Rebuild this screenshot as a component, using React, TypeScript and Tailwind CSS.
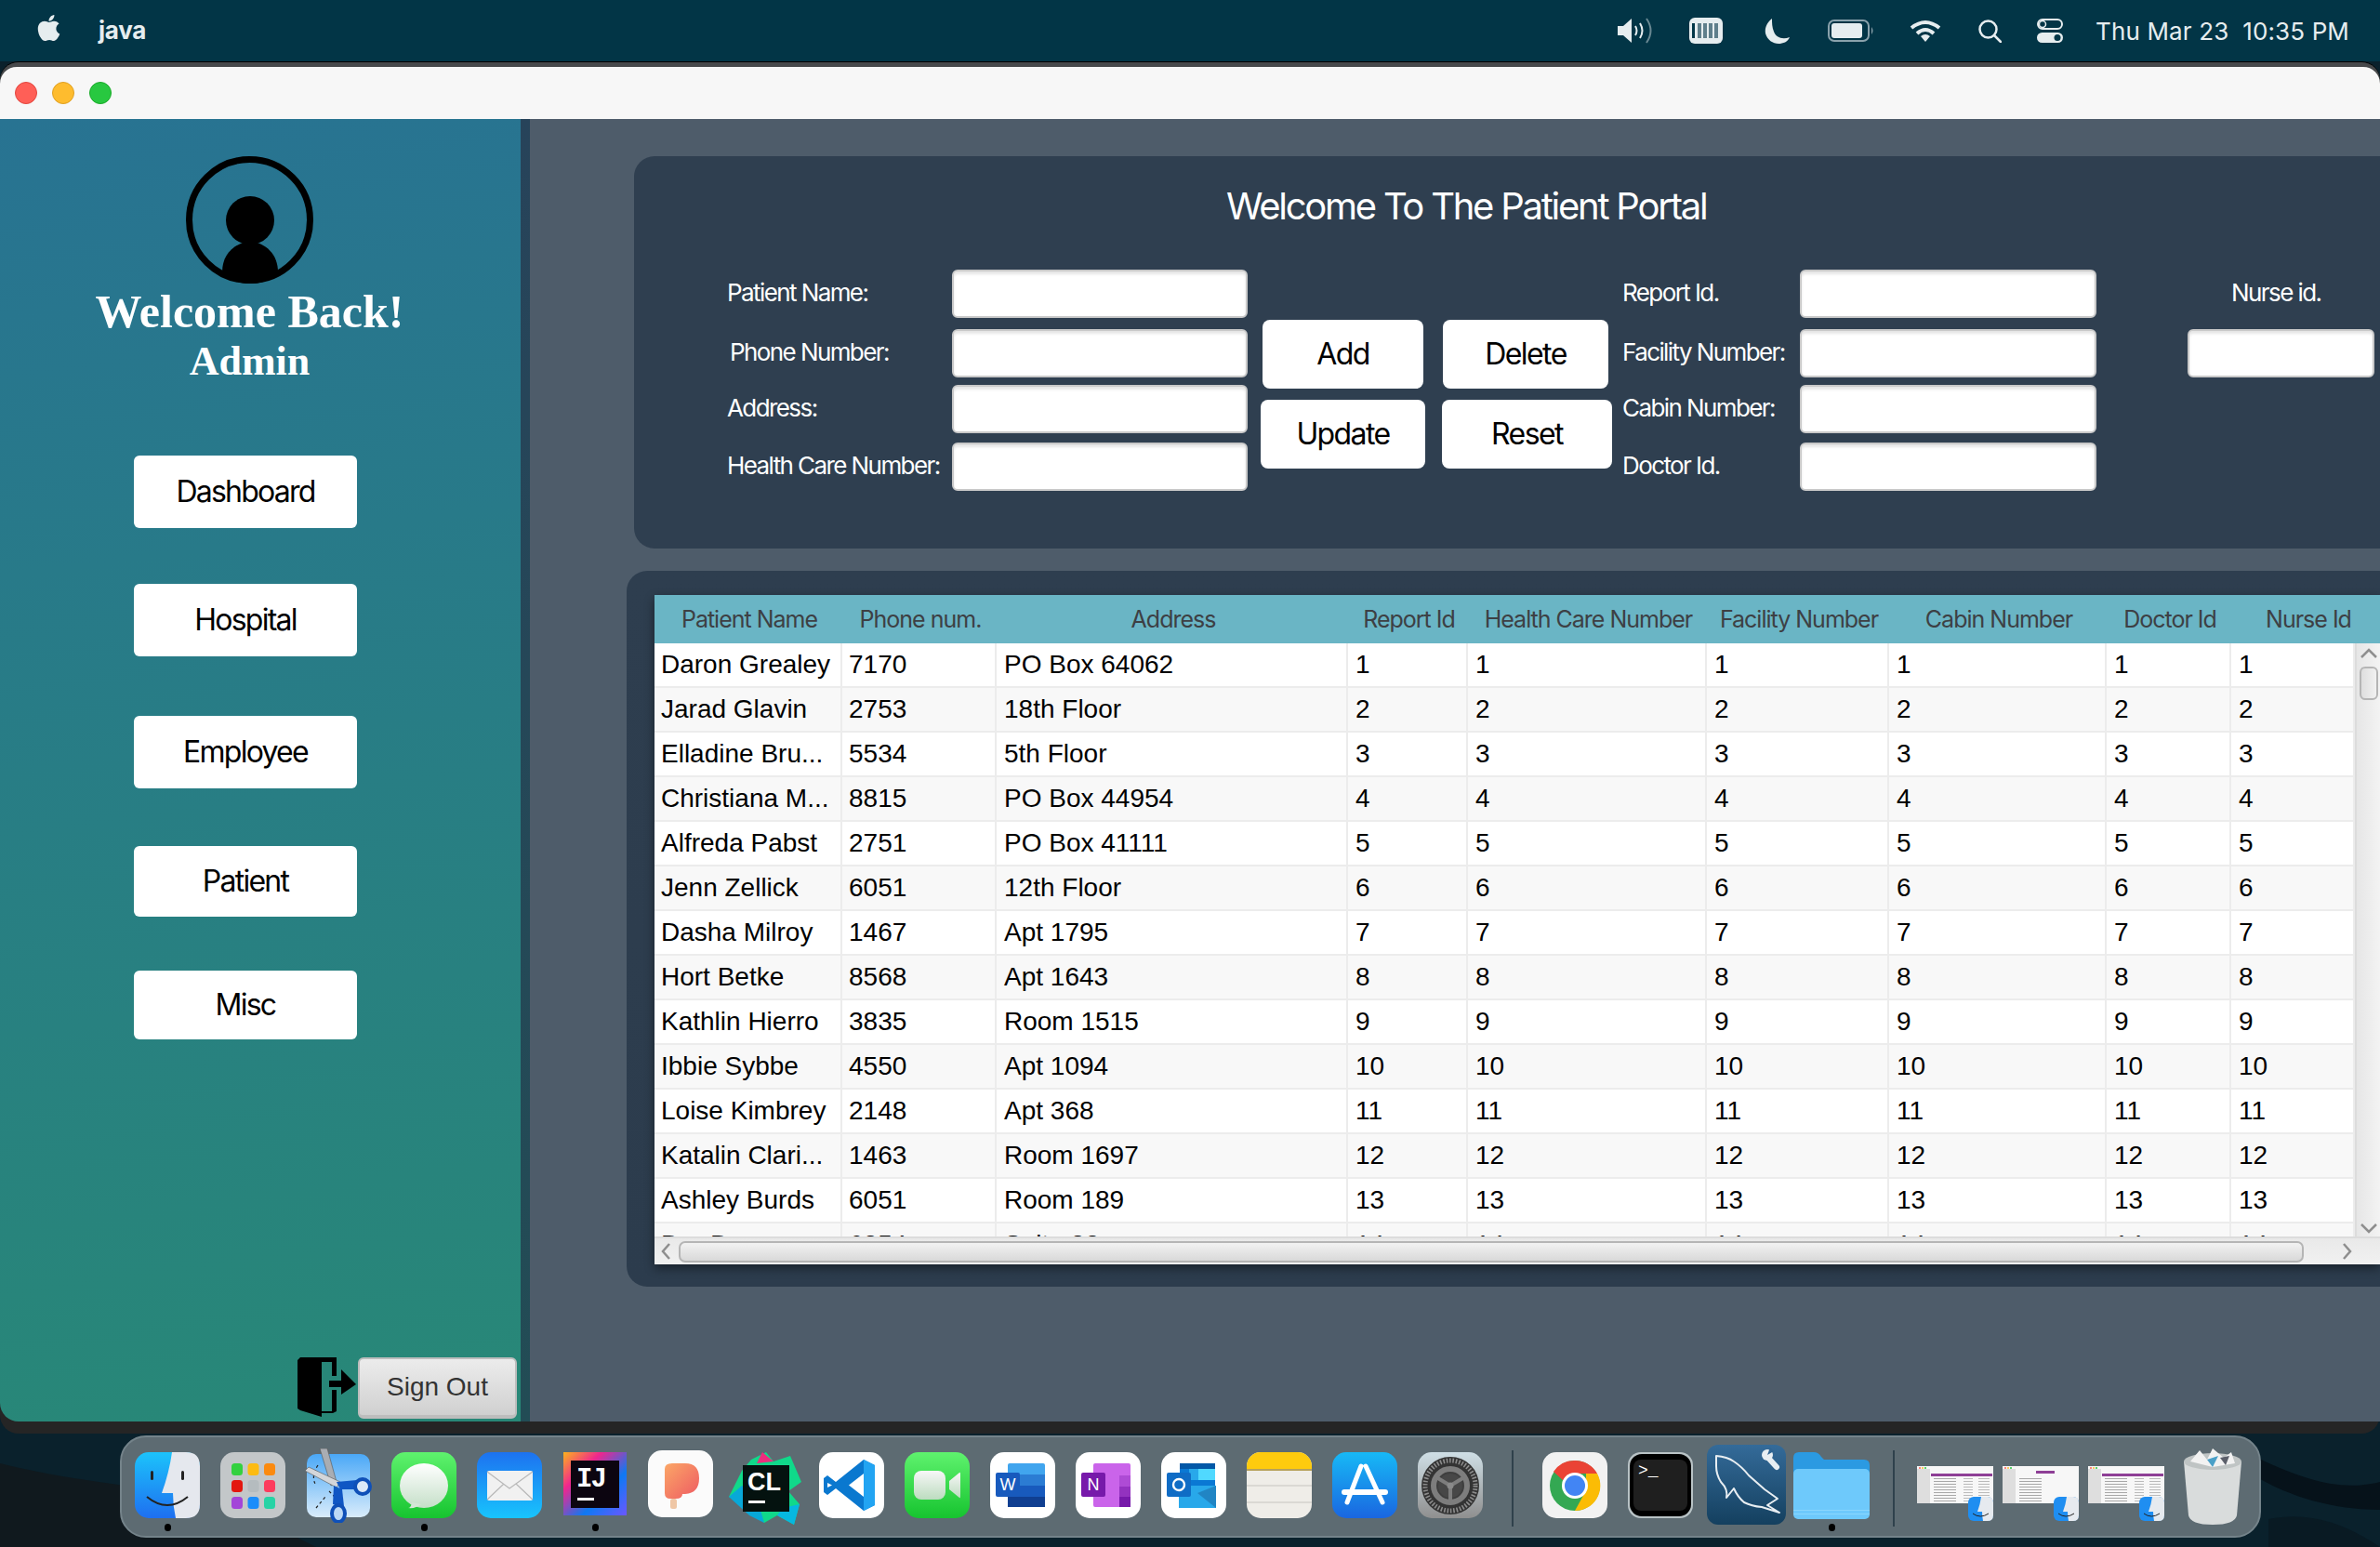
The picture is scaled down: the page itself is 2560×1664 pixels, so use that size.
import React from 'react'
import { FaApple } from 'react-icons/fa'

const patients = [
  ['Daron Grealey', '7170', 'PO Box 64062'],
  ['Jarad Glavin', '2753', '18th Floor'],
  ['Elladine Bru...', '5534', '5th Floor'],
  ['Christiana M...', '8815', 'PO Box 44954'],
  ['Alfreda Pabst', '2751', 'PO Box 41111'],
  ['Jenn Zellick', '6051', '12th Floor'],
  ['Dasha Milroy', '1467', 'Apt 1795'],
  ['Hort Betke', '8568', 'Apt 1643'],
  ['Kathlin Hierro', '3835', 'Room 1515'],
  ['Ibbie Sybbe', '4550', 'Apt 1094'],
  ['Loise Kimbrey', '2148', 'Apt 368'],
  ['Katalin Clari...', '1463', 'Room 1697'],
  ['Ashley Burds', '6051', 'Room 189'],
  ['Dru Dunn', '6354', 'Suite 83'],
]

const headers = ['Patient Name', 'Phone num.', 'Address', 'Report Id', 'Health Care Number', 'Facility Number', 'Cabin Number', 'Doctor Id', 'Nurse Id']

const navItems = [
  { label: 'Dashboard', cls: 'h-[78px] mt-[76px]' },
  { label: 'Hospital', cls: 'h-[78px] mt-[60px]' },
  { label: 'Employee', cls: 'h-[78px] mt-[64px]' },
  { label: 'Patient', cls: 'h-[76px] mt-[62px]' },
  { label: 'Misc', cls: 'h-[74px] mt-[58px]' },
]

const rowGaps = ['', 'mt-[12px]', 'mt-[8px]', 'mt-[10px]']
const rowTemplate = 'grid grid-cols-[202px_166px_378px_129px_257px_196px_234px_134px_133px]'
const headerTemplate = 'grid grid-cols-[202px_166px_378px_129px_257px_196px_234px_134px_164px]'

const Field = ({ className = '' }: { className?: string }) => (
  <input className={`block h-[52px] rounded-[6px] border-2 border-[#c9c9c9] bg-white shadow-[inset_0_3px_3px_#e6e6e6] ${className}`} />
)

const LabelColumn = ({ labels, className }: { labels: string[]; className: string }) => (
  <div className={className}>
    {labels.map((label, i) => (
      <div key={label} className={`flex h-[52px] items-center whitespace-nowrap pb-[3px] text-[26px] tracking-[-0.061em] text-white ${rowGaps[i]} ${label === 'Phone Number:' ? 'pl-[3px]' : ''}`}>
        {label}
      </div>
    ))}
  </div>
)

const InputColumn = ({ className }: { className: string }) => (
  <div className={className}>
    {rowGaps.map((gap, i) => (
      <Field key={i} className={`w-full ${gap}`} />
    ))}
  </div>
)

const ActionButton = ({ label, className }: { label: string; className: string }) => (
  <button className={`flex h-[74px] items-center justify-center rounded-[8px] bg-white text-[32px] tracking-[-0.05em] text-black ${className}`}>{label}</button>
)

const Chevron = ({ d, className }: { d: string; className: string }) => (
  <svg viewBox="0 0 20 20" className={className} fill="none" stroke="#8e8e8e" strokeWidth="2.5">
    <path d={d} />
  </svg>
)

const Wave = () => (
  <svg className="absolute bottom-0 left-0 h-[130px] w-[2560px]" viewBox="0 0 2560 130">
    <rect width="2560" height="130" fill="#0a212c" />
    <path d="M0 40 C120 70 200 60 300 110 L340 130 L0 130Z" fill="#10191e" />
    <path d="M2420 30 C2480 60 2520 70 2560 60 L2560 90 C2500 90 2450 70 2420 50Z" fill="#06121a" />
    <path d="M2440 100 C2490 90 2530 110 2560 130 L2440 130Z" fill="#091a23" />
  </svg>
)

const SignOutIcon = () => (
  <svg viewBox="0 0 63 64" className="mr-[2px] h-[64px] w-[63px]">
    <path d="M0 3 L3 0 H42 V20 H37 V5 H26 V58 H37 V35 H42 V58 L38 60 H26 V64 L3 57 L0 55Z" fill="#000" />
    <path d="M34 25 H47 V13 L63 29 L47 40 V32 H34Z" fill="#000" />
  </svg>
)

const Avatar = () => (
  <svg viewBox="0 0 137 137" className="h-[137px] w-[137px]">
    <ellipse cx="68.5" cy="68.5" rx="65" ry="65" fill="none" stroke="#000" strokeWidth="7" />
    <ellipse cx="69" cy="69" rx="26" ry="26" fill="#000" />
    <path d="M39 125 C39 105 52 94 69 91 C86 94 99 105 99 125 C90 134 80 137 69 137 C58 137 48 134 39 125Z" fill="#000" />
  </svg>
)

const Speaker = () => (
  <svg viewBox="0 0 39 28" className="h-[28px] w-[39px]" fill="none" stroke="#e6edef">
    <path d="M0 9 H6 L15 1 V27 L6 19 H0Z" fill="#e6edef" stroke="none" />
    <path d="M19 9 Q22 14 19 19" strokeWidth="2" />
    <path d="M24 6 Q29 14 24 22" strokeWidth="2" />
    <path d="M31 1 Q40 14 31 27" strokeWidth="2" opacity="0.45" />
  </svg>
)

const KeyboardBattery = () => (
  <svg viewBox="0 0 36 28" className="h-[28px] w-[36px]">
    <rect width="36" height="28" rx="6" fill="#e6edef" />
    <rect x="3" y="6" width="3" height="16" fill="#023748" />
    <rect x="9" y="6" width="4" height="16" fill="#5f7f8b" />
    <rect x="15" y="6" width="4" height="16" fill="#5f7f8b" />
    <rect x="21" y="6" width="4" height="16" fill="#5f7f8b" />
    <rect x="27" y="6" width="4" height="16" fill="#5f7f8b" />
  </svg>
)

const Moon = () => (
  <svg viewBox="0 0 27 27" className="h-[27px] w-[27px]">
    <path d="M8 0 C3 4 0 9 1 16 C3 23 9 27 15 27 C20 27 25 25 27 20 C19 23 12 20 10 14 C8 9 8 5 8 0Z" fill="#e6edef" />
  </svg>
)

const Battery = () => (
  <svg viewBox="0 0 50 24" className="h-[24px] w-[50px]">
    <rect x="1" y="1" width="43" height="22" rx="6" fill="none" stroke="#8aa2ac" strokeWidth="2" />
    <rect x="4" y="4" width="33" height="16" rx="3" fill="#e6edef" />
    <path d="M47 8 Q50 12 47 16Z" fill="#8aa2ac" />
  </svg>
)

const Wifi = () => (
  <svg viewBox="0 0 34 24" className="h-[24px] w-[34px]" fill="none" stroke="#e6edef" strokeWidth="4">
    <path d="M2 9 Q17 -3 32 9" />
    <path d="M8 15 Q17 7 26 15" />
    <path d="M12 18 L17 24 L22 18 Q17 14 12 18Z" fill="#e6edef" stroke="none" />
  </svg>
)

const SearchGlyph = () => (
  <svg viewBox="0 0 25 25" className="h-[25px] w-[25px]" fill="none" stroke="#e6edef" strokeWidth="2.5">
    <circle cx="10.5" cy="10.5" r="9" />
    <path d="M17 17 L24 24" strokeLinecap="round" />
  </svg>
)

const Toggles = () => (
  <svg viewBox="0 0 28 26" className="h-[26px] w-[28px]">
    <rect x="1" y="1" width="26" height="10" rx="5" fill="none" stroke="#e6edef" strokeWidth="2" />
    <circle cx="6" cy="6" r="3.5" fill="none" stroke="#e6edef" strokeWidth="1.5" />
    <rect y="15" width="28" height="11" rx="5.5" fill="#e6edef" />
    <circle cx="22" cy="20.5" r="3.5" fill="#023748" />
  </svg>
)

const Finder = () => (
  <svg viewBox="0 0 70 71" className="h-[71px] w-[70px]">
    <defs>
      <linearGradient id="fin" x1="0" y1="0" x2="0" y2="1">
        <stop offset="0" stopColor="#1cc3fb" />
        <stop offset="1" stopColor="#1e6ff0" />
      </linearGradient>
    </defs>
    <rect width="70" height="71" rx="15" fill="url(#fin)" />
    <path d="M40 0 H55 Q70 0 70 15 V56 Q70 71 55 71 H44 Q41 58 41 44 H29 Q37 22 40 0Z" fill="#e5e8ee" />
    <rect x="17" y="20" width="3" height="10" rx="1.5" fill="#222" />
    <rect x="50" y="20" width="3" height="10" rx="1.5" fill="#222" />
    <path d="M13 48 Q35 66 57 48" fill="none" stroke="#222" strokeWidth="2" />
  </svg>
)

const Launchpad = () => {
  const colors = ['#33d13f', '#fdbb12', '#fb8a0f', '#e3170f', '#b5bcbf', '#fd3b5d', '#a345d8', '#1a8dfb', '#27d3a5']
  return (
    <svg viewBox="0 0 70 71" className="h-[71px] w-[70px]">
      <rect width="70" height="71" rx="15" fill="#c3c7c9" />
      {colors.map((c, i) => (
        <rect key={c} x={12 + (i % 3) * 17.5} y={12 + Math.floor(i / 3) * 18} width="12" height="13" rx="3.5" fill={c} />
      ))}
    </svg>
  )
}

const Scissors = () => (
  <svg viewBox="0 0 72 80" className="mt-[-4px] h-[80px] w-[72px]">
    <defs>
      <linearGradient id="sci" x1="0" y1="0" x2="0" y2="1">
        <stop offset="0" stopColor="#4aa8f7" />
        <stop offset="1" stopColor="#d9ecfb" />
      </linearGradient>
    </defs>
    <rect x="2" y="6" width="68" height="68" rx="10" fill="url(#sci)" />
    <path d="M14 18 Q6 30 12 40 M12 64 L22 52 M26 46 L32 52" stroke="#222" strokeWidth="1.2" strokeDasharray="3 3" fill="none" />
    <path d="M16 0 L24 0 L34 36 L28 40Z" fill="#a9adb3" stroke="#555" strokeWidth="0.6" />
    <path d="M0 24 L4 20 L38 36 L34 42Z" fill="#d3d6da" stroke="#555" strokeWidth="0.6" />
    <path d="M34 36 L56 34 L58 44 L38 44Z" fill="#0f56c4" />
    <circle cx="62" cy="41" r="8" fill="#dce9f8" stroke="#0f50b8" strokeWidth="4" />
    <path d="M31 40 L40 44 L42 62 L30 60Z" fill="#0f56c4" />
    <ellipse cx="36" cy="70" rx="7" ry="9" fill="#bcd9f5" stroke="#0f50b8" strokeWidth="4" />
  </svg>
)

const Messages = () => (
  <svg viewBox="0 0 70 71" className="h-[71px] w-[70px]">
    <defs>
      <linearGradient id="msg" x1="0" y1="0" x2="0" y2="1">
        <stop offset="0" stopColor="#5ff26e" />
        <stop offset="1" stopColor="#16c42f" />
      </linearGradient>
      <linearGradient id="bub" x1="0" y1="0" x2="0" y2="1">
        <stop offset="0" stopColor="#ffffff" />
        <stop offset="1" stopColor="#c5dfc8" />
      </linearGradient>
    </defs>
    <rect width="70" height="71" rx="15" fill="url(#msg)" />
    <ellipse cx="35" cy="36" rx="26" ry="24" fill="url(#bub)" />
    <path d="M22 54 Q21 60 18 60 Q26 61 32 56Z" fill="#d4e6d6" />
  </svg>
)

const Mail = () => (
  <svg viewBox="0 0 70 71" className="h-[71px] w-[70px]">
    <defs>
      <linearGradient id="mai" x1="0" y1="0" x2="0" y2="1">
        <stop offset="0" stopColor="#1d72f0" />
        <stop offset="1" stopColor="#18c4fd" />
      </linearGradient>
    </defs>
    <rect width="70" height="71" rx="15" fill="url(#mai)" />
    <rect x="11" y="20" width="49" height="32" rx="2" fill="#f1f1f1" />
    <path d="M11 21 L35 39 L60 21 M11 51 L29 34 M60 51 L42 34" fill="none" stroke="#b8b8b8" strokeWidth="1.2" />
  </svg>
)

const Intellij = () => (
  <svg viewBox="0 0 68 68" className="h-[68px] w-[68px]">
    <defs>
      <linearGradient id="ijg" x1="0" y1="0" x2="1" y2="1">
        <stop offset="0" stopColor="#fdb31c" />
        <stop offset="0.3" stopColor="#f0268e" />
        <stop offset="0.65" stopColor="#0f79f2" />
        <stop offset="1" stopColor="#6b57ff" />
      </linearGradient>
    </defs>
    <rect width="68" height="68" fill="url(#ijg)" />
    <rect x="8" y="9" width="52" height="51" fill="#0c0510" />
    <text x="14" y="37" fontFamily="'Liberation Mono',monospace" fontSize="29" fontWeight="700" fill="#fff" letterSpacing="-2">IJ</text>
    <rect x="15" y="49" width="18" height="3" fill="#fff" />
  </svg>
)

const Paprika = () => (
  <svg viewBox="0 0 70 72" className="mt-[-2px] h-[72px] w-[70px]">
    <defs>
      <linearGradient id="pap" x1="0" y1="0" x2="1" y2="1">
        <stop offset="0" stopColor="#fba767" />
        <stop offset="1" stopColor="#ee5a62" />
      </linearGradient>
    </defs>
    <rect width="70" height="72" rx="15" fill="#fbfbfb" />
    <path d="M18 20 Q18 14 26 14 H40 Q55 14 55 30 Q55 46 40 47 H37 V47 Q37 52 30 52 H24 Q18 52 18 46Z" fill="url(#pap)" />
    <rect x="24" y="52" width="7" height="11" rx="2.5" fill="#efc7a6" />
  </svg>
)

const Clion = () => (
  <svg viewBox="0 0 80 80" className="h-[80px] w-[80px]">
    <polygon points="24,8 40,0 48,10 66,4 78,32 64,42 76,56 70,78 52,68 38,76 22,60 0,48 14,20" fill="#10d98a" />
    <polygon points="36,0 48,10 30,12" fill="#ee2d7d" />
    <polygon points="14,36 0,48 22,68 38,76 30,48" fill="#08a8d8" />
    <polygon points="58,60 76,56 70,78 52,68" fill="#06b8e0" />
    <rect x="15" y="14" width="50" height="50" fill="#04120f" />
    <text x="20" y="41" fontFamily="'Liberation Sans',sans-serif" fontSize="27" fontWeight="700" fill="#fff">CL</text>
    <rect x="21" y="52" width="18" height="3" fill="#fff" />
  </svg>
)

const VsCode = () => (
  <svg viewBox="0 0 70 71" className="h-[71px] w-[70px]">
    <rect width="70" height="71" rx="15" fill="#fff" />
    <path d="M48 8 L60 14 V57 L48 63 L18 39 L9 46 L5 43 V28 L9 25 L18 32Z" fill="#0a78cf" />
    <path d="M48 8 L60 14 V57 L48 63 Z" fill="#22a4f2" />
    <path d="M48 23 L32 35.5 L48 48Z" fill="#fff" />
    <path d="M9 33 L14 35.5 L9 38Z" fill="#fff" />
  </svg>
)

const FaceTime = () => (
  <svg viewBox="0 0 70 71" className="h-[71px] w-[70px]">
    <defs>
      <linearGradient id="fac" x1="0" y1="0" x2="0" y2="1">
        <stop offset="0" stopColor="#5ff26e" />
        <stop offset="1" stopColor="#16c42f" />
      </linearGradient>
      <linearGradient id="cam" x1="0" y1="0" x2="0" y2="1">
        <stop offset="0" stopColor="#f7f7f7" />
        <stop offset="1" stopColor="#bcdcbf" />
      </linearGradient>
    </defs>
    <rect width="70" height="71" rx="15" fill="url(#fac)" />
    <rect x="10" y="20" width="34" height="31" rx="8" fill="url(#cam)" />
    <path d="M48 31 L59 22 Q60 21 60 24 V47 Q60 50 59 49 L48 40Z" fill="url(#cam)" />
  </svg>
)

const Word = () => (
  <svg viewBox="0 0 70 71" className="h-[71px] w-[70px]">
    <rect width="70" height="71" rx="15" fill="#fff" />
    <rect x="19" y="12" width="40" height="47" rx="2" fill="#41a5ee" />
    <rect x="19" y="24" width="40" height="12" fill="#2b7cd3" />
    <rect x="19" y="36" width="40" height="12" fill="#185abd" />
    <rect x="19" y="48" width="40" height="11" fill="#103f91" />
    <rect x="6" y="22" width="26" height="26" rx="2" fill="#185abd" />
    <text x="19" y="41" textAnchor="middle" fontFamily="'Liberation Sans',sans-serif" fontSize="18" fill="#fff">W</text>
  </svg>
)

const OneNote = () => (
  <svg viewBox="0 0 70 71" className="h-[71px] w-[70px]">
    <rect width="70" height="71" rx="15" fill="#fff" />
    <rect x="19" y="12" width="40" height="47" rx="2" fill="#ca64ea" />
    <rect x="47" y="25" width="12" height="12" fill="#ae4bd5" />
    <rect x="47" y="37" width="12" height="11" fill="#9332bf" />
    <rect x="47" y="48" width="12" height="11" fill="#7719aa" />
    <rect x="6" y="22" width="26" height="26" rx="2" fill="#7719aa" />
    <text x="19" y="41" textAnchor="middle" fontFamily="'Liberation Sans',sans-serif" fontSize="18" fill="#fff">N</text>
  </svg>
)

const Outlook = () => (
  <svg viewBox="0 0 70 71" className="h-[71px] w-[70px]">
    <rect width="70" height="71" rx="15" fill="#fff" />
    <rect x="20" y="12" width="38" height="24" fill="#0a78d4" />
    <rect x="20" y="12" width="38" height="6" fill="#0358a7" />
    <rect x="39" y="18" width="19" height="12" fill="#50d9ff" />
    <rect x="30" y="18" width="10" height="12" fill="#28a8ea" />
    <path d="M19 36 L59 36 V60 H19Z" fill="#28a8ea" />
    <path d="M39 44 L59 36 V60Z" fill="#14447d" opacity="0.35" />
    <rect x="6" y="22" width="26" height="26" rx="2" fill="#0f6cc5" />
    <circle cx="19" cy="35" r="6" fill="none" stroke="#fff" strokeWidth="2.4" />
  </svg>
)

const Notes = () => (
  <svg viewBox="0 0 70 71" className="h-[71px] w-[70px]">
    <defs>
      <clipPath id="noc"><rect width="70" height="71" rx="15" /></clipPath>
    </defs>
    <g clipPath="url(#noc)">
      <rect width="70" height="71" fill="#efede8" />
      <rect width="70" height="18" fill="#fecb0e" />
      <rect y="18" width="70" height="2" fill="#b7a25a" />
      <rect y="35" width="70" height="2" fill="#dad8d3" />
      <rect y="53" width="70" height="2" fill="#dad8d3" />
    </g>
  </svg>
)

const AppStore = () => (
  <svg viewBox="0 0 70 71" className="h-[71px] w-[70px]">
    <defs>
      <linearGradient id="app" x1="0" y1="0" x2="0" y2="1">
        <stop offset="0" stopColor="#17b9f6" />
        <stop offset="1" stopColor="#1a66e0" />
      </linearGradient>
    </defs>
    <rect width="70" height="71" rx="15" fill="url(#app)" />
    <path d="M31 15 L16 54 M36 15 L54 54" stroke="#fff" strokeWidth="5" strokeLinecap="round" fill="none" />
    <path d="M13 43 H57" stroke="#fff" strokeWidth="6" strokeLinecap="round" />
  </svg>
)

const SystemPrefs = () => (
  <svg viewBox="0 0 70 71" className="h-[71px] w-[70px]">
    <defs>
      <linearGradient id="set" x1="0" y1="0" x2="0" y2="1">
        <stop offset="0" stopColor="#cfdfe6" />
        <stop offset="1" stopColor="#8f8f8f" />
      </linearGradient>
    </defs>
    <rect width="70" height="71" rx="15" fill="url(#set)" />
    <circle cx="35" cy="36" r="31" fill="#333" />
    <circle cx="35" cy="36" r="27" fill="none" stroke="#8c8c8c" strokeWidth="5" strokeDasharray="1.6 1.8" />
    <circle cx="35" cy="36" r="21" fill="#3e3e3e" />
    <circle cx="35" cy="36" r="18" fill="none" stroke="#7d7d7d" strokeWidth="6" />
    <circle cx="35" cy="36" r="13" fill="#474747" />
    <path d="M35 36 V54 M35 36 L20 27 M35 36 L50 27" stroke="#7d7d7d" strokeWidth="4" />
    <circle cx="35" cy="36" r="3.5" fill="#8a8a8a" />
  </svg>
)

const Chrome = () => (
  <svg viewBox="0 0 70 71" className="h-[71px] w-[70px]">
    <rect width="70" height="71" rx="15" fill="#f2f2f2" />
    <circle cx="35" cy="36" r="27" fill="#34a853" />
    <path d="M35 9 A27 27 0 0 1 59 23 H35 A13 13 0 0 0 23 31 L12 21 A27 27 0 0 1 35 9Z" fill="#ea4335" />
    <path d="M59 23 A27 27 0 0 1 35 63 L46 43 A13 13 0 0 0 47 30 L47 23Z" fill="#fbbc05" />
    <circle cx="35" cy="36" r="14" fill="#fff" />
    <circle cx="35" cy="36" r="11" fill="#4285f4" />
  </svg>
)

const Terminal = () => (
  <svg viewBox="0 0 70 71" className="h-[71px] w-[70px]">
    <rect width="70" height="71" rx="14" fill="#b9c3c6" />
    <rect x="2" y="2" width="66" height="67" rx="13" fill="#000" />
    <rect x="6" y="8" width="58" height="55" rx="8" fill="#1f1f1f" />
    <text x="11" y="25" fontFamily="'Liberation Mono',monospace" fontSize="18" fill="#fff">{'>_'}</text>
  </svg>
)

const Workbench = () => (
  <svg viewBox="0 0 85 86" className="mt-[-8px] h-[86px] w-[85px]">
    <defs>
      <linearGradient id="wbg" x1="0" y1="0" x2="0" y2="1">
        <stop offset="0" stopColor="#346b99" />
        <stop offset="1" stopColor="#14405f" />
      </linearGradient>
    </defs>
    <rect width="85" height="86" rx="12" fill="url(#wbg)" />
    <path d="M10 12 Q22 13 29 18 Q38 24 45 33 L62 48 L76 58 L65 65 L78 73 L59 67 Q48 66 40 62 Q33 56 29 47 L21 57 Q23 48 15 40 Q10 32 10 23Z" fill="none" stroke="#e8eef2" strokeWidth="2" strokeLinejoin="round" />
    <path d="M65 13 L75 24" stroke="#e8eef2" strokeWidth="6" strokeLinecap="round" />
    <circle cx="65" cy="11" r="6" fill="#e8eef2" />
    <path d="M65 11 L68 3 L72 7Z" fill="#2f6492" />
  </svg>
)

const Folder = () => (
  <svg viewBox="0 0 82 72" className="h-[72px] w-[82px]">
    <path d="M0 6 Q0 0 6 0 H22 Q27 0 30 5 L33 8 H76 Q82 8 82 14 V30 H0Z" fill="#2b9ae2" />
    <rect y="18" width="82" height="54" rx="5" fill="#6ec9fb" />
    <rect y="62" width="82" height="1" fill="#8ad6fc" />
    <rect y="66" width="82" height="1" fill="#8ad6fc" />
  </svg>
)

// finder window preview with the little finder badge on it
const Thumb = ({ purpleAt, sparse }: { purpleAt: number; sparse?: boolean }) => (
  <svg viewBox="0 0 84 60" className="mt-[15px] h-[60px] w-[84px]">
    <rect width="82" height="40" fill="#f7f7f7" />
    <rect y="3" width="14" height="37" fill="#dedede" />
    <circle cx="3" cy="2" r="1" fill="#ff5f57" />
    <circle cx="6" cy="2" r="1" fill="#febc2e" />
    <circle cx="9" cy="2" r="1" fill="#28c840" />
    <rect x={sparse ? 36 : 15} y={purpleAt} width={sparse ? 20 : 66} height="3" fill="#8e3f96" />
    {[13, 16, 19, 22, 25, 28, 31, 34, 37].map((y) => (
      <g key={y}>
        <rect x="18" y={y} width="24" height="1" fill="#a8a8a8" />
        {!sparse && <rect x="50" y={y} width="10" height="1" fill="#bbbbbb" />}
        {!sparse && <rect x="66" y={y} width="12" height="1" fill="#bbbbbb" />}
      </g>
    ))}
    <g transform="translate(55 33)">
      <rect width="27" height="26" rx="6" fill="#1f8ef1" />
      <path d="M14 0 H21 Q27 0 27 6 V20 Q27 26 21 26 H16 Q15 20 15 16 H10 Q13 8 14 0Z" fill="#e6eaef" />
      <path d="M5 18 Q13 24 22 18" fill="none" stroke="#222" strokeWidth="1" />
    </g>
  </svg>
)

const Trash = () => (
  <svg viewBox="0 0 64 84" className="mt-[-6px] h-[84px] w-[64px]">
    <path d="M1 16 L6 74 Q8 84 32 84 Q56 84 58 74 L63 16Z" fill="#d9dcdc" />
    <ellipse cx="32" cy="16" rx="31" ry="9" fill="#bfc4c4" />
    <path d="M8 16 L18 4 L26 14 L32 2 L44 12 L52 6 L56 18 L32 22Z" fill="#f2f2f2" />
    <path d="M26 14 L32 22 L38 10Z" fill="#4aa0c8" />
    <path d="M40 12 L46 20 L50 10Z" fill="#5b5f6a" />
  </svg>
)

const dockLeft = [
  { icon: <Finder />, dot: true },
  { icon: <Launchpad /> },
  { icon: <Scissors /> },
  { icon: <Messages />, dot: true },
  { icon: <Mail /> },
  { icon: <Intellij />, dot: true },
  { icon: <Paprika /> },
  { icon: <Clion /> },
  { icon: <VsCode /> },
  { icon: <FaceTime /> },
  { icon: <Word /> },
  { icon: <OneNote /> },
  { icon: <Outlook /> },
  { icon: <Notes /> },
  { icon: <AppStore /> },
  { icon: <SystemPrefs /> },
]

const dockMiddle = [
  { icon: <Chrome /> },
  { icon: <Terminal /> },
  { icon: <Workbench /> },
  { icon: <Folder />, dot: true },
]

const dockRight = [
  { icon: <Thumb purpleAt={8} /> },
  { icon: <Thumb purpleAt={5} sparse /> },
  { icon: <Thumb purpleAt={8} /> },
  { icon: <Trash /> },
]

const DockCell = ({ icon, dot }: { icon: React.ReactNode; dot?: boolean }) => (
  <div className="relative flex h-full w-[92px] shrink-0 justify-center pt-[16px]">
    <div className="flex h-[71px] items-start justify-center">{icon}</div>
    {dot && <span className="absolute bottom-[5px] h-[8px] w-[7px] rounded-full bg-black" />}
  </div>
)

const DockDivider = () => (
  <div className="flex h-full w-[42px] shrink-0 justify-center pt-[14px]">
    <div className="h-[82px] w-[2px] bg-[#2f414c]" />
  </div>
)

const App = () => {
  return (
    <div className="relative flex h-[1664px] w-[2560px] flex-col overflow-hidden bg-[#0a212c] font-[Inter,sans-serif]">
      <Wave />

      <div className="relative flex h-[66px] shrink-0 items-center bg-[#023546] text-[#e6edef]">
        <FaApple className="ml-[38px] mb-[6px] h-[32px] w-[29px]" />
        <span className="ml-[39px] mb-[2px] text-[26px] font-bold tracking-[-0.01em]">java</span>
        <div className="ml-auto flex items-center">
          <Speaker />
          <div className="ml-[38px]"><KeyboardBattery /></div>
          <div className="ml-[45px]"><Moon /></div>
          <div className="ml-[41px]"><Battery /></div>
          <div className="ml-[38px]"><Wifi /></div>
          <div className="ml-[40px]"><SearchGlyph /></div>
          <div className="ml-[38px]"><Toggles /></div>
          <span className="ml-[35px] mr-[33px] whitespace-pre text-[26px] tracking-[0.005em]">Thu Mar 23  10:35 PM</span>
        </div>
      </div>

      <div className="relative flex h-[1476px] shrink-0 flex-col rounded-[20px] border-t border-[#000] bg-[#252525]">
        <div className="h-[25px] shrink-0 rounded-t-[20px] bg-[#47494b]" />
        <div className="-mt-[20px] flex h-[56px] shrink-0 items-center rounded-t-[18px] bg-[#f7f7f7] pl-[16px]">
          <span className="h-[24px] w-[24px] rounded-full border border-[#e2463f] bg-[#ff5f57]" />
          <span className="ml-[16px] h-[24px] w-[24px] rounded-full border border-[#dfa023] bg-[#febc2e]" />
          <span className="ml-[16px] h-[24px] w-[24px] rounded-full border border-[#1aab29] bg-[#28c840]" />
        </div>

        <div className="flex h-[1401px] shrink-0">
          <aside className="flex h-full w-[560px] shrink-0 flex-col rounded-bl-[20px] bg-[linear-gradient(172deg,#287392,#288877)]">
            <div className="flex w-[537px] flex-col items-center pt-[40px] font-['Liberation_Serif',serif]">
              <Avatar />
              <h1 className="text-[50px] font-bold leading-[60px] text-white">Welcome Back!</h1>
              <h2 className="-mt-px text-[44px] font-bold leading-[50px] text-white">Admin</h2>
              {navItems.map((item) => (
                <button key={item.label} className={`mr-[9px] flex w-[240px] items-center justify-center rounded-[6px] bg-white font-[Inter,sans-serif] text-[32px] tracking-[-0.055em] text-black ${item.cls}`}>
                  {item.label}
                </button>
              ))}
            </div>
            <div className="mt-auto flex justify-end pb-[3px] pr-[4px]">
              <SignOutIcon />
              <button className="h-[66px] w-[171px] rounded-[6px] border-2 border-b-[4px] border-[#bdbdbd] bg-gradient-to-b from-[#ececec] to-[#d0d0d0] font-['Liberation_Sans',sans-serif] text-[28px] text-[#333]">
                Sign Out
              </button>
            </div>
          </aside>
          <div className="h-full w-[10px] shrink-0 bg-gradient-to-b from-[#27435a] to-[#224c55]" />

          <main className="flex h-full min-w-0 flex-1 flex-col bg-[#4e5c6a] pt-[40px]">
            <section className="ml-[112px] h-[422px] shrink-0 rounded-l-[22px] bg-[#2f3f50]">
              <div className="h-[122px] pl-[637px] pt-[30px] text-[40px] leading-[48px] tracking-[-0.056em] text-white">Welcome To The Patient Portal</div>
              <div className="flex pl-[100px]">
                <LabelColumn labels={['Patient Name:', 'Phone Number:', 'Address:', 'Health Care Number:']} className="w-[242px]" />
                <InputColumn className="w-[318px]" />
                <div className="flex w-[403px] flex-col gap-[12px] pt-[54px]">
                  <div className="flex gap-[21px] pl-[16px]">
                    <ActionButton label="Add" className="w-[173px]" />
                    <ActionButton label="Delete" className="w-[178px]" />
                  </div>
                  <div className="flex gap-[18px] pl-[14px]">
                    <ActionButton label="Update" className="w-[177px]" />
                    <ActionButton label="Reset" className="w-[183px]" />
                  </div>
                </div>
                <LabelColumn labels={['Report Id.', 'Facility Number:', 'Cabin Number:', 'Doctor Id.']} className="w-[191px]" />
                <InputColumn className="w-[319px]" />
                <div className="flex flex-col">
                  <div className="ml-[145px] flex h-[52px] items-center pb-[3px] text-[26px] tracking-[-0.061em] text-white">Nurse id.</div>
                  <Field className="ml-[98px] mt-[12px] w-[201px]" />
                </div>
              </div>
            </section>

            <section className="ml-[104px] mt-[24px] h-[770px] shrink-0 rounded-l-[22px] bg-gradient-to-b from-[#2e3e4f] to-[#2c3c4d] pl-[30px] pt-[26px]">
              <div className="flex h-[720px] flex-col overflow-x-clip bg-white shadow-[0_4px_10px_rgba(0,0,0,0.45)]">
                <div className={`${headerTemplate} h-[52px] shrink-0 bg-[#6ab5c5]`}>
                  {headers.map((h) => (
                    <div key={h} className="flex items-center justify-center whitespace-nowrap pl-[2px] pt-[2px] text-[25px] tracking-[-0.04em] text-[#3d4044]">{h}</div>
                  ))}
                </div>
                <div className="flex h-[638px] shrink-0">
                  <div className="h-full w-[1829px] shrink-0 overflow-hidden font-['Liberation_Sans',sans-serif] text-[28px] text-black">
                    {patients.map((row, i) => {
                      const n = String(i + 1)
                      const cells = [...row, n, n, n, n, n, n]
                      return (
                        <div key={i} className={`${rowTemplate} h-[48px] border-b-2 border-[#ececec] ${i % 2 ? 'bg-[#f8f8f8]' : 'bg-white'}`}>
                          {cells.map((c, j) => (
                            <div key={j} className={`flex items-center whitespace-nowrap border-r-2 border-[#ececec] ${j < 2 ? 'pl-[7px]' : 'pl-[8px]'}`}>{c}</div>
                          ))}
                        </div>
                      )
                    })}
                  </div>
                  <div className="flex h-full w-[27px] shrink-0 flex-col items-center border-l-2 border-[#dcdcdc] bg-gradient-to-r from-[#e6e6e6] to-[#f3f3f3]">
                    <Chevron d="M2 13 L10 5 L18 13" className="mt-[2px] h-[20px] w-[20px]" />
                    <div className="mt-[3px] h-[36px] w-[20px] rounded-[6px] border-2 border-[#b5b5b5] bg-gradient-to-r from-[#dedede] to-[#f1f1f1]" />
                    <Chevron d="M2 7 L10 15 L18 7" className="mb-[0px] mt-auto h-[20px] w-[20px]" />
                  </div>
                </div>
                <div className="flex h-[30px] shrink-0 items-center border-t-2 border-[#dcdcdc] bg-gradient-to-b from-[#e9e9e9] to-[#f1f1f1]">
                  <Chevron d="M13 2 L6 10 L13 18" className="ml-[3px] h-[20px] w-[20px]" />
                  <div className="ml-[3px] h-[23px] w-[1748px] rounded-[7px] border-2 border-[#b5b5b5] bg-gradient-to-b from-[#f2f2f2] to-[#d9d9d9]" />
                  <Chevron d="M7 2 L14 10 L7 18" className="ml-[36px] h-[20px] w-[20px]" />
                </div>
              </div>
            </section>
          </main>
        </div>
      </div>

      <div className="relative ml-[129px] mt-[2px] flex h-[110px] w-[2303px] shrink-0 rounded-[28px] border-2 border-[#74838a] bg-[#5d6b72] pl-[3px]">
        {dockLeft.map((d, i) => <DockCell key={i} {...d} />)}
        <DockDivider />
        {dockMiddle.map((d, i) => <DockCell key={i} {...d} />)}
        <DockDivider />
        {dockRight.map((d, i) => <DockCell key={i} {...d} />)}
      </div>
    </div>
  )
}

export default App
